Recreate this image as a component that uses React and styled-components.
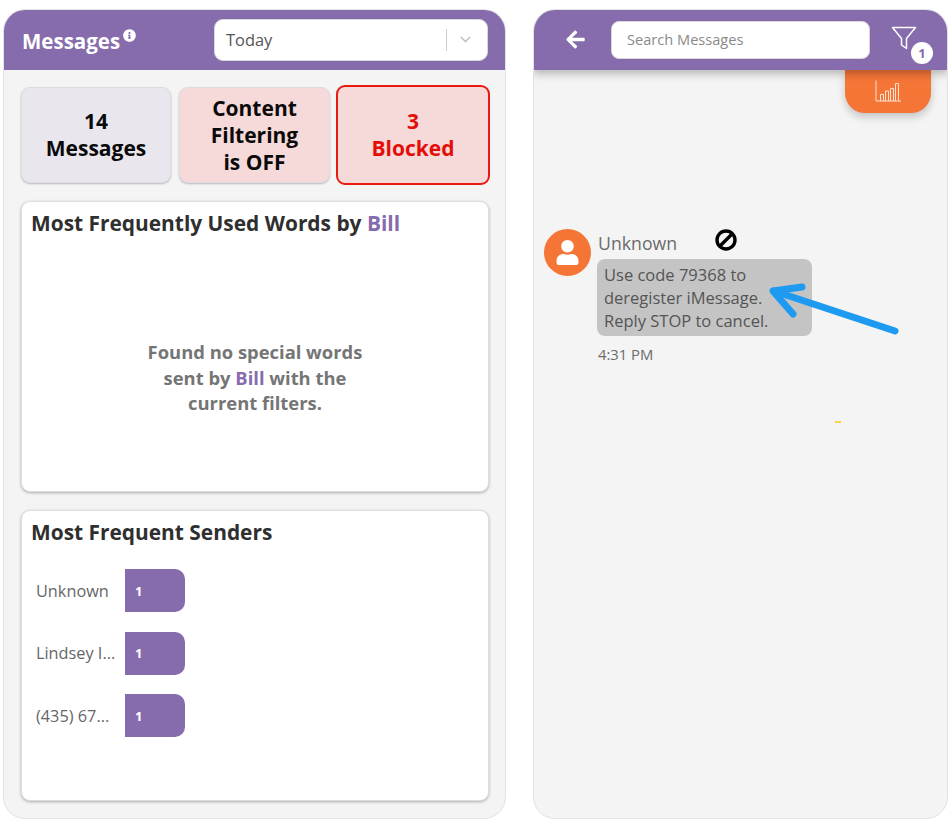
import React from "react";
import styled, { createGlobalStyle } from "styled-components";
import { FaArrowLeft, FaInfoCircle, FaUser } from "react-icons/fa";
import { FiChevronDown } from "react-icons/fi";

const PURPLE = "#866cad";
const FONT = '"Open Sans", "Noto Sans", sans-serif';

const senders = [
  { name: "Unknown", count: 1 },
  { name: "Lindsey I...", count: 1 },
  { name: "(435) 67...", count: 1 },
];

const App = () => {
  return (
    <>
      <GlobalStyle />
      <Page>
        <LeftPanel>
          <LeftHeader>
            <Title>
              Messages
              <InfoIcon />
            </Title>
            <Select>
              <SelectValue>Today</SelectValue>
              <SelectDivider />
              <Chevron />
            </Select>
          </LeftHeader>
          <LeftBody>
            <Stats>
              <Stat>
                14
                <br />
                Messages
              </Stat>
              <Stat tone="pink">
                Content
                <br />
                Filtering
                <br />
                is OFF
              </Stat>
              <Stat tone="blocked">
                3
                <br />
                Blocked
              </Stat>
            </Stats>
            <Card>
              <CardTitle>
                Most Frequently Used Words by <Name>Bill</Name>
              </CardTitle>
              <EmptyText>
                Found no special words
                <br />
                sent by <Name>Bill</Name> with the
                <br />
                current filters.
              </EmptyText>
            </Card>
            <Card>
              <CardTitle>Most Frequent Senders</CardTitle>
              <SenderList>
                {senders.map((s) => (
                  <SenderRow key={s.name}>
                    <SenderName>{s.name}</SenderName>
                    <SenderBar>{s.count}</SenderBar>
                  </SenderRow>
                ))}
              </SenderList>
            </Card>
          </LeftBody>
        </LeftPanel>

        <RightPanel>
          <RightHeader>
            <BackArrow />
            <Search>Search Messages</Search>
            <FilterButton>
              <svg width="26" height="24" viewBox="0 0 26 24" fill="none">
                <path
                  d="M1.5 1.5H24.5L15.5 12.5V22.5L10.5 19V12.5Z"
                  stroke="#fff"
                  strokeWidth="1.5"
                  strokeLinejoin="round"
                />
              </svg>
              <FilterBadge>1</FilterBadge>
            </FilterButton>
          </RightHeader>
          <ChatBody>
            <ChartTab>
              <svg width="26" height="22" viewBox="0 0 26 22" fill="none" stroke="#ffe3d2" strokeWidth="1">
                <path d="M1 0.5V21H26" />
                <path d="M5.5 21V14.5H8.5V21" />
                <path d="M10.5 21V11H13.5V21" />
                <path d="M15.5 21V8.5H18.5V21" />
                <path d="M20.5 21V3.5H23.5V21" />
              </svg>
            </ChartTab>
            <Message>
              <Avatar>
                <FaUser />
              </Avatar>
              <MessageMain>
                <SenderLine>
                  Unknown
                  <BlockIcon width="24" height="24" viewBox="0 0 24 24" fill="none" stroke="#000" strokeWidth="3.4">
                    <circle cx="12" cy="12" r="9" />
                    <path d="M6 18L18 6" />
                  </BlockIcon>
                </SenderLine>
                <Bubble>
                  Use code 79368 to
                  <br />
                  deregister iMessage.
                  <br />
                  Reply STOP to cancel.
                </Bubble>
                <Time>4:31 PM</Time>
              </MessageMain>
            </Message>
            <Annotation width="140" height="60" viewBox="0 0 140 60" fill="none" stroke="#1e9bf0" strokeWidth="7" strokeLinecap="round" strokeLinejoin="round">
              <path d="M129 48L8 8" />
              <path d="M36 4L7 8L27 31" />
            </Annotation>
            <Speck />
          </ChatBody>
        </RightPanel>
      </Page>
    </>
  );
};

export default App;

const GlobalStyle = createGlobalStyle`
  html, body {
    margin: 0;
    padding: 0;
    background: #fff;
  }
  * {
    box-sizing: border-box;
  }
`;

const Page = styled.div`
  display: flex;
  gap: 27px;
  width: 952px;
  height: 824px;
  padding: 9px 0 5px 3px;
  font-family: ${FONT};
`;

const Panel = styled.div`
  display: flex;
  flex-direction: column;
  height: 810px;
  background: #f4f4f4;
  border: 1px solid #e2e2e2;
  border-radius: 22px;
  overflow: hidden;
`;

const LeftPanel = styled(Panel)`
  width: 503px;
`;

const RightPanel = styled(Panel)`
  width: 415px;
`;

const Header = styled.div`
  display: flex;
  align-items: center;
  flex: none;
  height: 61px;
  margin: -1px -1px 0;
  background: ${PURPLE};
`;

const LeftHeader = styled(Header)`
  justify-content: space-between;
  padding: 0 18px 0 19px;
`;

const Title = styled.div`
  display: flex;
  align-items: flex-start;
  gap: 3px;
  color: #fff;
  font-size: 20.5px;
  font-weight: 700;
  line-height: 26px;
  padding-top: 3px;
`;

const InfoIcon = styled(FaInfoCircle)`
  width: 13px;
  height: 13px;
  margin-top: 1px;
  color: #fff;
`;

const Select = styled.div`
  display: flex;
  align-items: center;
  width: 274px;
  height: 42px;
  padding: 0 13px 0 11px;
  background: #fff;
  border: 1px solid #d8d8d8;
  border-radius: 9px;
`;

const SelectValue = styled.span`
  flex: 1;
  color: #555;
  font-size: 16.4px;
`;

const SelectDivider = styled.span`
  width: 1px;
  height: 22px;
  background: #ccc;
`;

const Chevron = styled(FiChevronDown)`
  width: 17px;
  height: 17px;
  margin-left: 10px;
  color: #c4c4c4;
`;

const LeftBody = styled.div`
  display: flex;
  flex-direction: column;
  gap: 18px;
  padding: 17px 16px 0 17px;
`;

const Stats = styled.div`
  display: grid;
  grid-template-columns: 150px 151px 150px;
  column-gap: 8px;
  height: 96px;
`;

const Stat = styled.div`
  display: flex;
  align-items: center;
  justify-content: center;
  text-align: center;
  font-size: 21px;
  font-weight: 700;
  line-height: 27px;
  border-radius: 9px;
  color: ${(p) => (p.tone === "blocked" ? "#e30e08" : "#0a0a0a")};
  background: ${(p) => (p.tone ? "#f6d9d9" : "#e9e6ed")};
  border: ${(p) => (p.tone === "blocked" ? "2px solid #e81a12" : "1px solid #dfdbe3")};
  box-shadow: ${(p) => (p.tone === "blocked" ? "none" : "0 1px 2px rgba(0, 0, 0, 0.25)")};
  margin: ${(p) => (p.tone === "blocked" ? "-2px" : "0")};
`;

const Card = styled.div`
  display: flex;
  flex-direction: column;
  height: 291px;
  width: 468px;
  padding: 7px 9px;
  background: #fff;
  border: 1px solid #dedede;
  border-radius: 9px;
  box-shadow: 0 1px 3px rgba(0, 0, 0, 0.3);
`;

const CardTitle = styled.div`
  color: #2f2f2f;
  font-size: 20.9px;
  font-weight: 700;
  line-height: 28px;
`;

const Name = styled.span`
  color: ${PURPLE};
`;

const EmptyText = styled.div`
  margin-top: 102px;
  text-align: center;
  color: #757575;
  font-size: 18.4px;
  font-weight: 700;
  line-height: 25.5px;
`;

const SenderList = styled.div`
  display: flex;
  flex-direction: column;
  gap: 19.5px;
  margin-top: 23px;
  padding-left: 5px;
`;

const SenderRow = styled.div`
  display: flex;
  align-items: center;
`;

const SenderName = styled.span`
  width: 89px;
  color: #666;
  font-size: 16.3px;
  white-space: nowrap;
`;

const SenderBar = styled.div`
  display: flex;
  align-items: center;
  width: 60px;
  height: 43px;
  padding-left: 10px;
  background: ${PURPLE};
  color: #fff;
  font-size: 13px;
  font-weight: 700;
  border-radius: 0 10px 10px 0;
`;

const RightHeader = styled(Header)`
  position: relative;
  z-index: 2;
  padding-left: 31px;
  box-shadow: 0 4px 8px rgba(0, 0, 0, 0.25);
`;

const BackArrow = styled(FaArrowLeft)`
  width: 23px;
  height: 21px;
  color: #fff;
`;

const Search = styled.div`
  display: flex;
  align-items: center;
  width: 259px;
  height: 38px;
  margin-left: 24px;
  padding: 0 0 2px 15px;
  background: #fff;
  border: 1px solid #d8d8d8;
  border-radius: 8px;
  color: #8a8a8a;
  font-size: 14.6px;
`;

const FilterButton = styled.div`
  position: relative;
  display: flex;
  width: 26px;
  height: 24px;
  margin: -3px 0 0 21px;
`;

const FilterBadge = styled.div`
  position: absolute;
  left: 20px;
  top: 16px;
  display: flex;
  align-items: center;
  justify-content: center;
  width: 22px;
  height: 22px;
  border-radius: 50%;
  background: #fff;
  color: ${PURPLE};
  font-size: 13px;
  font-weight: 700;
`;

const ChatBody = styled.div`
  position: relative;
  display: flex;
  flex-direction: column;
  flex: 1;
`;

const ChartTab = styled.div`
  display: flex;
  align-items: flex-end;
  justify-content: center;
  align-self: flex-end;
  width: 86px;
  height: 43px;
  margin-right: 16px;
  padding: 0 0 11px 0;
  background: #f57537;
  border-radius: 0 0 20px 20px;
  box-shadow: 0 4px 8px rgba(0, 0, 0, 0.2);
`;

const Message = styled.div`
  display: flex;
  gap: 6px;
  margin: 116px 0 0 10px;
`;

const Avatar = styled.div`
  display: flex;
  align-items: center;
  justify-content: center;
  flex: none;
  width: 47px;
  height: 47px;
  border-radius: 50%;
  background: #f57537;
  color: #fff;
  font-size: 25px;
`;

const MessageMain = styled.div`
  display: flex;
  flex-direction: column;
  align-items: flex-start;
`;

const SenderLine = styled.div`
  position: relative;
  height: 30px;
  padding: 3px 0 0 1px;
  color: #6b6b6b;
  font-size: 17.7px;
  line-height: 22px;
`;

const BlockIcon = styled.svg`
  position: absolute;
  left: 117px;
  top: -1px;
`;

const Bubble = styled.div`
  width: 215px;
  height: 77px;
  padding: 4px 7px;
  background: #c4c4c4;
  border-radius: 8px;
  color: #555;
  font-size: 16.5px;
  line-height: 23px;
`;

const Time = styled.div`
  margin: 9px 0 0 1px;
  color: #6b6b6b;
  font-size: 14.8px;
  line-height: 18px;
`;

const Annotation = styled.svg`
  position: absolute;
  left: 232px;
  top: 213px;
`;

const Speck = styled.div`
  position: absolute;
  left: 301px;
  top: 351px;
  width: 6px;
  height: 1.5px;
  background: #f5d84a;
`;
